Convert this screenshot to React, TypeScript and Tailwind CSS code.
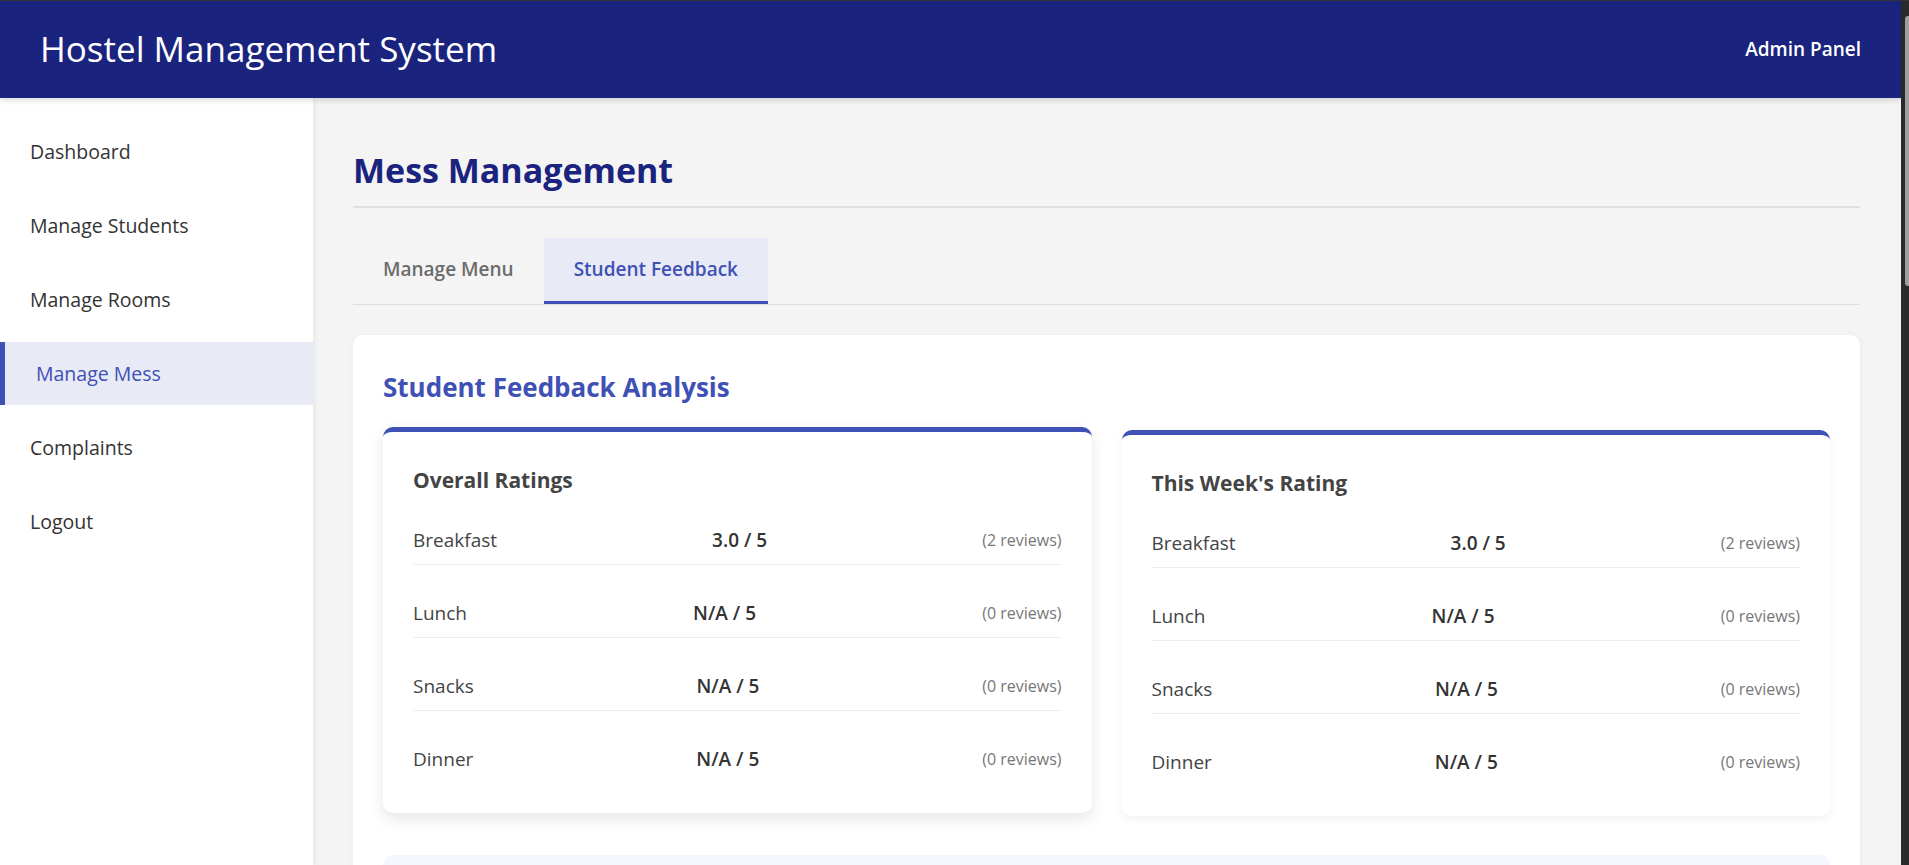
const navItems = [
  "Dashboard",
  "Manage Students",
  "Manage Rooms",
  "Manage Mess",
  "Complaints",
  "Logout",
];

const overall = [
  { meal: "Breakfast", avg: "3.0", count: 2 },
  { meal: "Lunch", avg: "N/A", count: 0 },
  { meal: "Snacks", avg: "N/A", count: 0 },
  { meal: "Dinner", avg: "N/A", count: 0 },
];

const weekly = [
  { meal: "Breakfast", avg: "3.0", count: 2 },
  { meal: "Lunch", avg: "N/A", count: 0 },
  { meal: "Snacks", avg: "N/A", count: 0 },
  { meal: "Dinner", avg: "N/A", count: 0 },
];

type Rating = { meal: string; avg: string; count: number };

const RatingCard = ({ title, ratings, raised }: { title: string; ratings: Rating[]; raised?: boolean }) => (
  <div
    className={
      raised
        ? "bg-white rounded-[10px] border-t-[5px] border-[#3f51b5] px-[30px] pt-[34px] pb-[30px] -translate-y-[3px] shadow-[0_6px_16px_rgba(0,0,0,0.1)]"
        : "bg-white rounded-[10px] border-t-[5px] border-[#3f51b5] px-[30px] pt-[34px] pb-[30px] shadow-[0_3px_10px_rgba(0,0,0,0.06)]"
    }
  >
    <h4 className="text-[21px] leading-[28px] font-bold text-[#444] mb-[22px]">{title}</h4>
    <div>
      {ratings.map((r, i) => (
        <div
          key={r.meal}
          className={
            i === ratings.length - 1
              ? "flex justify-between items-center py-3 leading-[24px]"
              : "flex justify-between items-center py-3 leading-[24px] border-b border-[#eeeeee] mb-6"
          }
        >
          <span className="text-[19px] font-medium text-[#444]">{r.meal}</span>
          <span className="text-[19px] font-semibold text-[#333]">{r.avg} / 5</span>
          <span className="text-[16px] text-[#777]">({r.count} reviews)</span>
        </div>
      ))}
    </div>
  </div>
);

export default function App() {
  return (
    <div className="h-[865px] overflow-hidden flex flex-col bg-[#2b2b2b] font-['Open_Sans',sans-serif]">
      <div className="h-px bg-[#333]" />
      <div className="flex flex-1 min-h-0">
        <div className="flex-1 flex flex-col min-w-0 bg-[#f4f4f4]">
          {/* top bar */}
          <header className="h-[97px] shrink-0 bg-[#1a237e] text-white flex items-center justify-between px-10 shadow-[0_2px_6px_rgba(0,0,0,0.15)] relative z-10">
            <h1 className="text-[35px] font-medium">Hostel Management System</h1>
            <span className="text-[19px] font-semibold">Admin Panel</span>
          </header>

          <div className="flex flex-1 min-h-0">
            {/* sidebar */}
            <nav className="w-[313px] shrink-0 bg-white pt-[22px] shadow-[2px_0_5px_rgba(0,0,0,0.05)]">
              <ul className="flex flex-col gap-[11px]">
                {navItems.map((item) => (
                  <li
                    key={item}
                    className={
                      item === "Manage Mess"
                        ? "h-[63px] flex items-center pl-[31px] border-l-[5px] border-[#3f51b5] bg-[#e8eaf6] text-[#3f51b5] text-[19.5px] font-medium"
                        : "h-[63px] flex items-center pl-[30px] text-[#333] text-[19.5px] font-medium"
                    }
                  >
                    {item}
                  </li>
                ))}
              </ul>
            </nav>

            {/* main */}
            <main className="flex-1 min-w-0 pl-10 pr-[41px] pt-[50px]">
              <h2 className="text-[34px] leading-[44px] font-bold text-[#1a237e] pb-[14px] border-b-2 border-[#e0e0e0]">
                Mess Management
              </h2>

              <div className="flex mt-[30px] border-b border-[#dddddd]">
                <button className="h-[66px] px-[30px] flex items-center text-[19px] font-semibold text-[#6b6b6b] border-b-[3px] border-transparent">
                  Manage Menu
                </button>
                <button className="h-[66px] px-[30px] flex items-center text-[19px] font-semibold text-[#3f51b5] bg-[#e8eaf6] border-b-[3px] border-[#3f51b5]">
                  Student Feedback
                </button>
              </div>

              <section className="mt-[30px] bg-white rounded-[10px] px-[30px] pt-[36px] pb-[30px] shadow-[0_2px_8px_rgba(0,0,0,0.05)]">
                <h3 className="text-[26px] leading-[32px] font-bold text-[#3f51b5] mb-[27px]">Student Feedback Analysis</h3>
                <div className="grid grid-cols-2 gap-[30px]">
                  <RatingCard title="Overall Ratings" ratings={overall} raised />
                  <RatingCard title="This Week's Rating" ratings={weekly} />
                </div>
                <div className="mt-[39px] h-[220px] rounded-[10px] bg-[#f4f7fe]" />
              </section>
            </main>
          </div>
        </div>

        {/* window scrollbar */}
        <div className="w-[8px] shrink-0 bg-[#2b2b2b] flex flex-col pt-[15px]">
          <div className="ml-[4px] h-[270px] rounded-l-[3px] bg-[#9e9e9e]" />
        </div>
      </div>
    </div>
  );
}
